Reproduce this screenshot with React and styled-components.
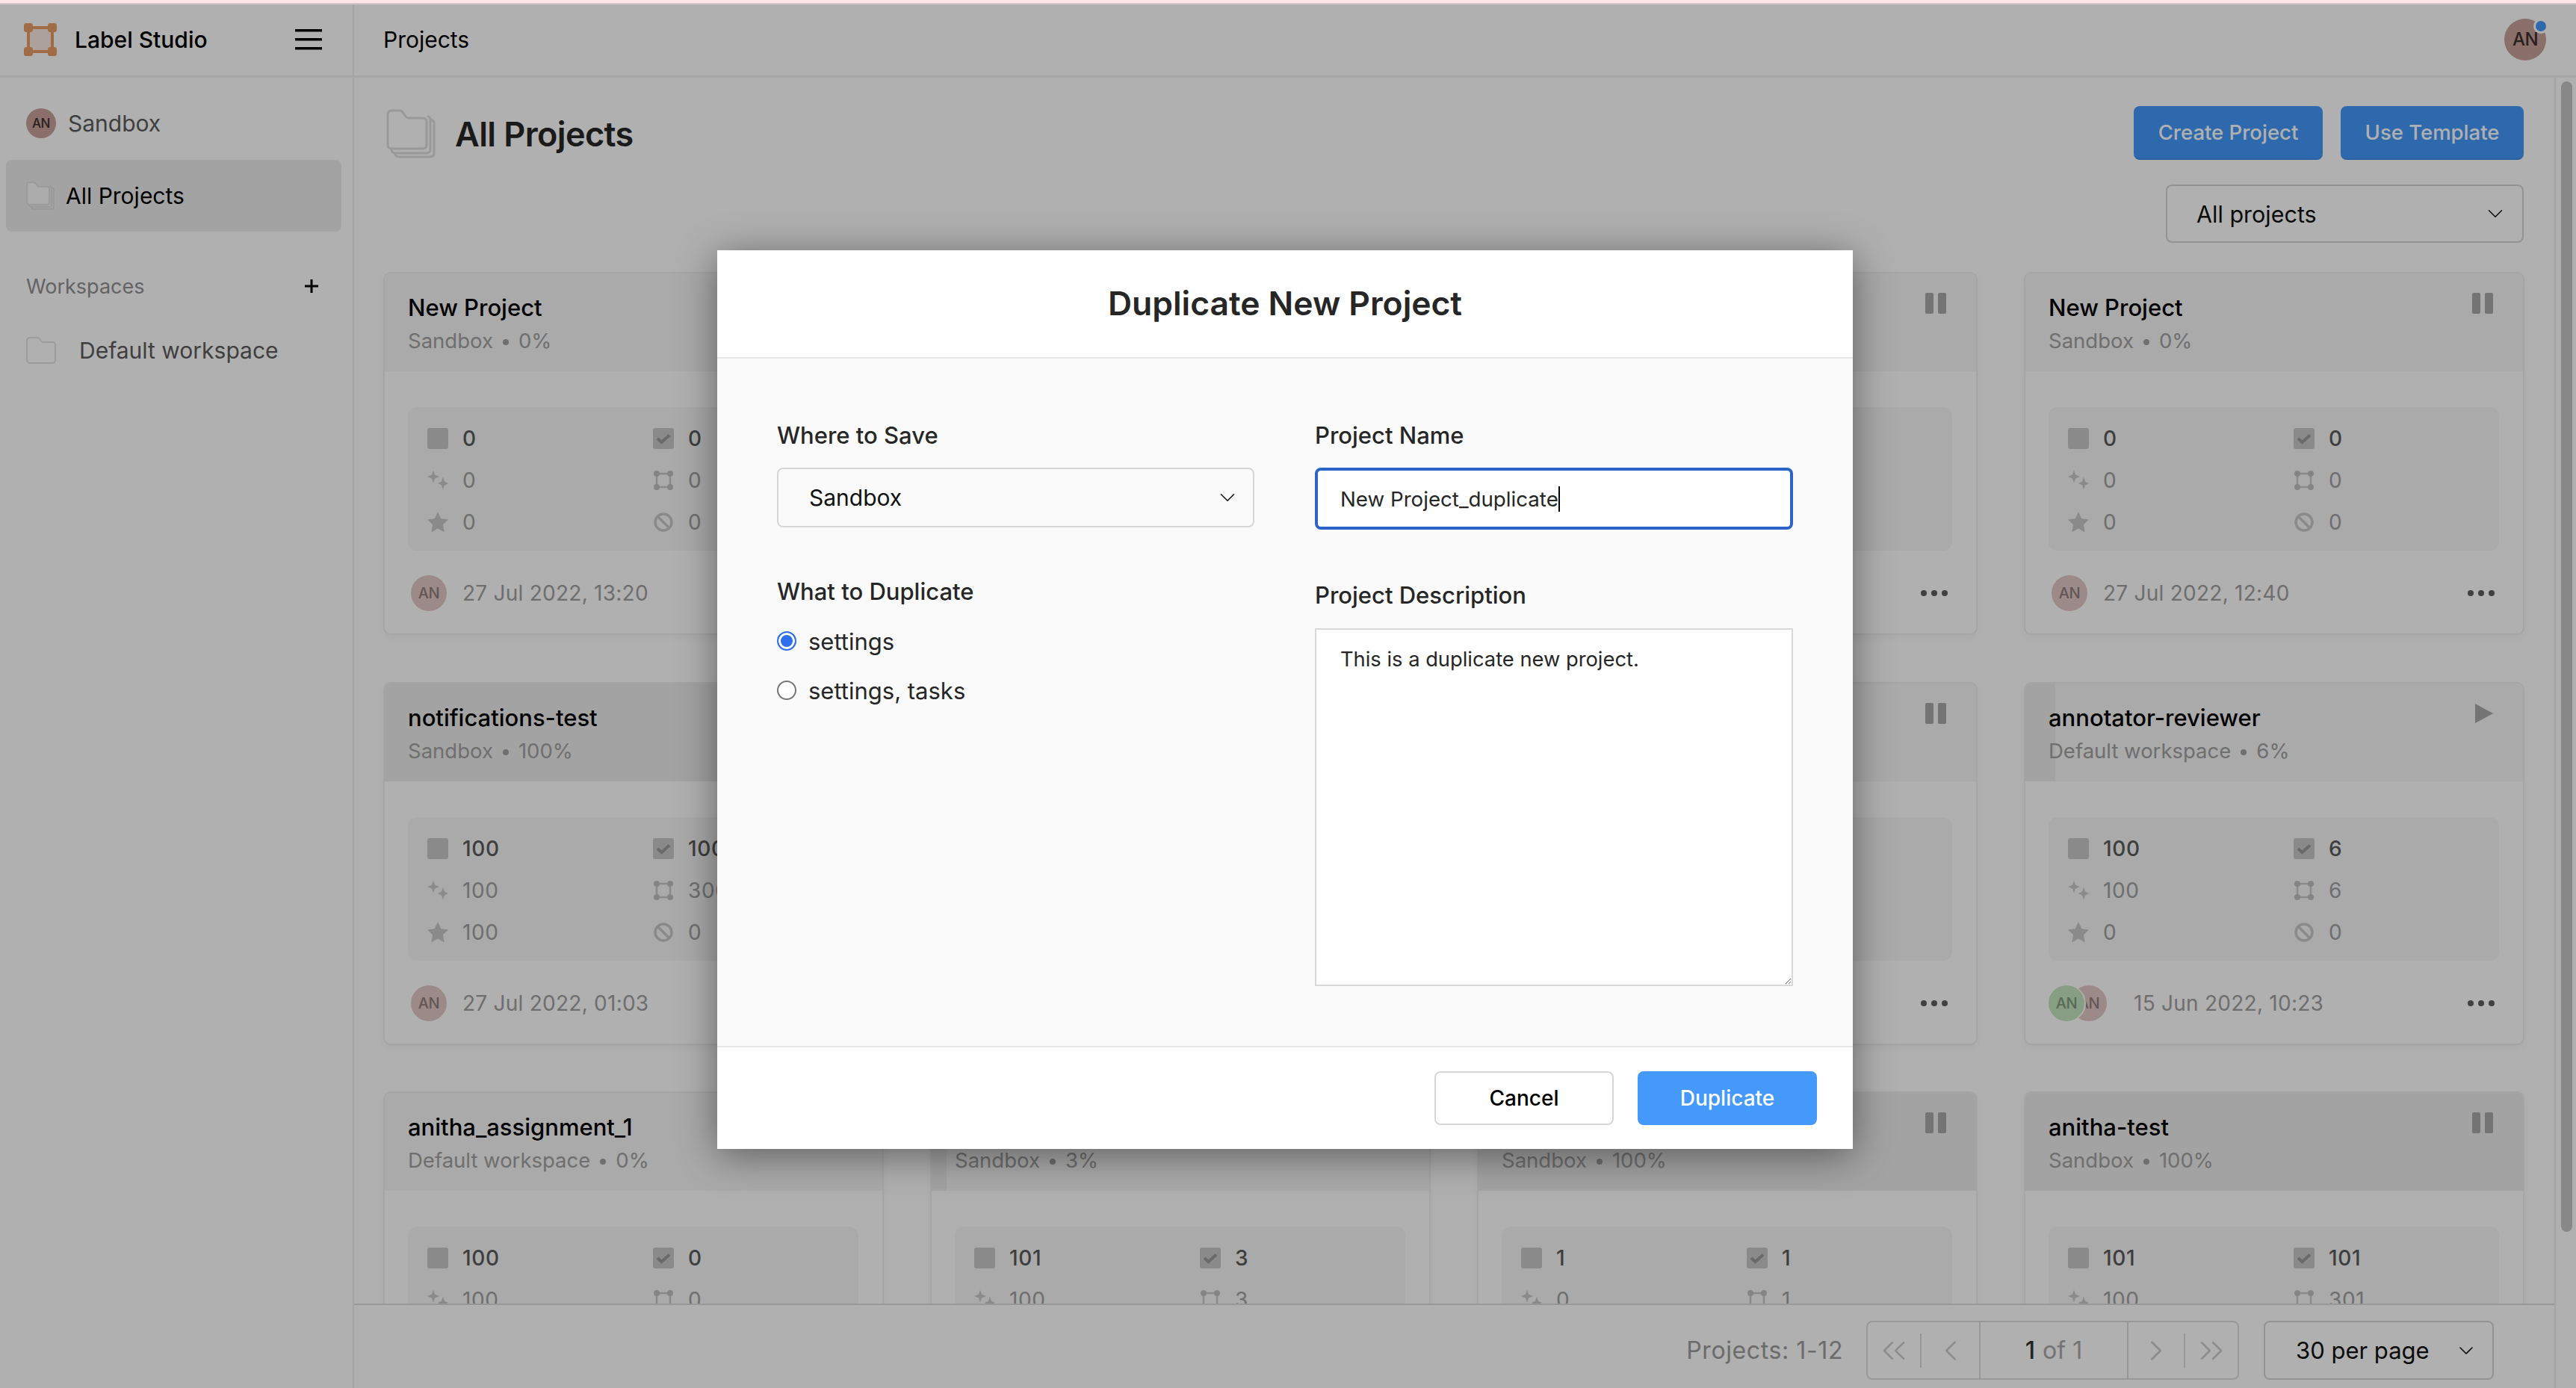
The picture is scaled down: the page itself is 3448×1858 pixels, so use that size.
import React from "react";
import styled, { createGlobalStyle } from "styled-components";
import { ChevronDown, ChevronLeft, ChevronRight, ChevronsLeft, ChevronsRight } from "lucide-react";

const GlobalStyle = createGlobalStyle`
  html, body {
    margin: 0;
    height: 100%;
    overflow: hidden;
    background: #fff;
    font-family: Inter, "Liberation Sans", sans-serif;
  }
  * { box-sizing: border-box; }
`;

const Page = styled.div`
  position: relative;
  display: flex;
  flex-direction: column;
  width: 3448px;
  height: 1858px;
  overflow: hidden;
`;

const TopStrip = styled.div`
  flex: none;
  height: 6px;
  background: #fde6ea;
  border-bottom: 2px solid #d9c3c7;
`;

const TopBar = styled.header`
  flex: none;
  display: flex;
  height: 98px;
  border-bottom: 3px solid #f0f0f0;
`;

const Brand = styled.div`
  flex: none;
  display: flex;
  align-items: center;
  width: 474px;
  padding: 0 41px 2px 32px;
  border-right: 2px solid #eeeeee;
`;

const BrandName = styled.span`
  flex: 1;
  margin-left: 24px;
  font-size: 30px;
  font-weight: 500;
  color: #000;
`;

const Crumb = styled.div`
  flex: 1;
  display: flex;
  align-items: center;
  justify-content: space-between;
  padding: 0 40px 2px 39px;
  font-size: 30px;
  color: #000;
`;

const Avatar = styled.span`
  flex: none;
  display: inline-flex;
  align-items: center;
  justify-content: center;
  width: ${(p) => p.$size}px;
  height: ${(p) => p.$size}px;
  border-radius: 50%;
  background: ${(p) => p.$bg};
  color: ${(p) => p.$color};
  font-size: ${(p) => Math.round(p.$size * 0.42)}px;
  font-weight: 500;
  letter-spacing: -0.5px;
`;

const AvatarPair = styled.div`
  flex: none;
  display: flex;
  isolation: isolate;
  margin: 0 15px 0 -4px;
`;

const FrontAvatar = styled(Avatar)`
  position: relative;
  z-index: 1;
  box-shadow: 2px 0 0 #fff;
`;

const BackAvatar = styled(Avatar)`
  margin-left: -18px;
`;

const UserBadge = styled.div`
  position: relative;
  display: flex;
`;

const NotifyDot = styled.span`
  position: absolute;
  top: 0;
  right: -3px;
  width: 20px;
  height: 20px;
  border: 3px solid #fff;
  border-radius: 50%;
  background: #4499fb;
`;

const Body = styled.div`
  flex: 1;
  display: flex;
  min-height: 0;
`;

const Sidebar = styled.aside`
  flex: none;
  width: 474px;
  padding: 41px 15px 0 8px;
  border-right: 2px solid #eeeeee;
`;

const SideRow = styled.div`
  display: flex;
  align-items: center;
  height: ${(p) => p.$height}px;
  margin-top: ${(p) => p.$top || 0}px;
  padding: 0 ${(p) => p.$right || 0}px 0 27px;
  border-radius: 8px;
  font-size: 30px;
  color: ${(p) => (p.$active ? "#000" : "#5c5c5c")};
  background: ${(p) => (p.$active ? "#ededed" : "transparent")};
  gap: ${(p) => p.$gap}px;
`;

const SideLabel = styled.span`
  flex: 1;
  font-size: 27px;
  color: #909090;
`;

const Main = styled.main`
  flex: 1;
  display: flex;
  min-width: 0;
`;

const MainColumn = styled.div`
  flex: 1;
  display: flex;
  flex-direction: column;
  min-width: 0;
`;

const Scroller = styled.div`
  flex: 1;
  min-height: 0;
  overflow: hidden;
  padding: 38px 41px 0 39px;
`;

const PageHead = styled.div`
  display: flex;
  justify-content: space-between;
  height: 222px;
`;

const PageTitle = styled.div`
  display: flex;
  align-items: center;
  gap: 26px;
  height: 74px;
  padding: 0 0 0 4px;
  font-size: 45px;
  font-weight: 600;
  letter-spacing: -0.6px;
  color: #262626;
`;

const Actions = styled.div`
  display: flex;
  flex-direction: column;
  align-items: flex-end;
  gap: 33px;
`;

const ActionRow = styled.div`
  display: flex;
  gap: 24px;
`;

const ActionButton = styled.button`
  width: ${(p) => p.$width}px;
  height: 72px;
  border: none;
  border-bottom: 2px solid #3d8ce8;
  border-radius: 8px;
  background: #4499fb;
  color: #fff;
  font: 500 27.5px Inter, "Liberation Sans", sans-serif;
`;

const SelectBox = styled.div`
  display: flex;
  align-items: center;
  justify-content: space-between;
  width: ${(p) => p.$width}px;
  height: ${(p) => p.$height}px;
  padding: 0 ${(p) => p.$padRight}px 0 ${(p) => p.$padLeft}px;
  border: 2px solid #d6d6d6;
  border-radius: 8px;
  font-size: ${(p) => p.$font}px;
  color: #111;
`;

const CardGrid = styled.div`
  display: grid;
  grid-template-columns: repeat(4, 670px);
  column-gap: 62px;
  row-gap: 62.5px;
`;

const Card = styled.article`
  height: 486px;
  border: 2px solid #f0f0f0;
  border-radius: 10px;
  background: #fff;
  box-shadow: 0 4px 8px rgba(0, 0, 0, 0.04);
  overflow: hidden;
`;

const CardHead = styled.div`
  display: flex;
  justify-content: space-between;
  height: 131px;
  padding: 0 40px 0 31px;
  background: linear-gradient(to right, #ededed ${(p) => p.$done}%, #f6f6f6 ${(p) => p.$done}%);
`;

const CardName = styled.div`
  margin-top: 26px;
  font-size: 31px;
  line-height: 40px;
  font-weight: 500;
  color: #000;
`;

const CardSub = styled.div`
  display: flex;
  align-items: center;
  gap: 13px;
  margin-top: 7px;
  font-size: 27.5px;
  line-height: 34px;
  color: #a1a1a1;
`;

const SubDot = styled.span`
  width: 8px;
  height: 8px;
  margin-top: 4px;
  border-radius: 50%;
  background: #a1a1a1;
`;

const StateIcon = styled.svg`
  flex: none;
  width: 28px;
  height: 28px;
  margin-top: 26px;
  fill: #a8a8a8;
`;

const Stats = styled.div`
  display: grid;
  grid-template-columns: 302px 1fr;
  grid-auto-rows: 56px;
  height: 192px;
  margin: 48px 32px 0 31px;
  padding: 14px 0 0 26px;
  border-radius: 12px;
  background: #f6f6f6;
`;

const Stat = styled.div`
  display: flex;
  align-items: center;
  gap: 19px;
  font-size: 28px;
  letter-spacing: 0.6px;
  font-weight: ${(p) => (p.$strong ? 500 : 400)};
  color: ${(p) => (p.$strong ? "#5b5b5b" : "#a0a0a0")};
`;

const IconSvg = styled.svg`
  flex: none;
  width: 28px;
  height: 28px;
`;

const CardFoot = styled.div`
  display: flex;
  align-items: center;
  height: 114px;
  padding: 0 38px 0 35px;
`;

const CardDate = styled.span`
  flex: 1;
  margin-left: 21px;
  font-size: 28px;
  letter-spacing: 0.25px;
  color: #a0a0a0;
`;

const Pager = styled.footer`
  flex: none;
  display: flex;
  align-items: flex-start;
  justify-content: flex-end;
  height: 113px;
  padding: 21px 81px 0 0;
  border-top: 2px solid #dcdcdc;
  background: #fff;
`;

const PagerCount = styled.span`
  margin: 20px 31px 0 0;
  font-size: 32px;
  letter-spacing: 0.6px;
  color: #9c9c9c;
`;

const PagerBox = styled.div`
  display: flex;
  align-items: center;
  height: 79px;
  margin-right: 33px;
  border: 2px solid #dddddd;
  border-radius: 8px;
`;

const PagerCell = styled.span`
  display: flex;
  align-items: center;
  justify-content: center;
  width: ${(p) => p.$width}px;
  height: ${(p) => (p.$short ? 46 : 75)}px;
  border-left: ${(p) => (p.$line ? "2px solid #dddddd" : "none")};
  color: #cbcbcb;
`;

const PagerCurrent = styled(PagerCell)`
  height: 75px;
  font-size: 32px;
  color: #a8a8a8;
  b { font-weight: 500; color: #333; margin-right: 10px; }
`;

const Gutter = styled.div`
  flex: none;
  width: 29px;
  padding: 5px 5px 0 7px;
  border-left: 2px solid #eeeeee;
`;

const ScrollThumb = styled.div`
  height: 1540px;
  border-radius: 9px;
  background: #c6c6c6;
`;

const Overlay = styled.div`
  position: absolute;
  inset: 6px 0 0 0;
  z-index: 5;
  display: flex;
  justify-content: center;
  padding: 329px 8px 0 0;
  background: rgba(0, 0, 0, 0.31);
`;

const Modal = styled.section`
  display: flex;
  flex-direction: column;
  width: 1520px;
  height: 1203px;
  background: #fff;
  color: #262626;
  box-shadow: 0 8px 50px rgba(0, 0, 0, 0.45);
`;

const ModalHead = styled.h2`
  flex: none;
  display: flex;
  align-items: center;
  justify-content: center;
  height: 145px;
  margin: 0;
  padding-bottom: 2px;
  border-bottom: 2px solid #e6e6e6;
  font-size: 44.4px;
  font-weight: 600;
`;

const ModalBody = styled.div`
  flex: 1;
  display: grid;
  grid-template-columns: 639px 640px;
  column-gap: 81px;
  padding: 83px 80px 0;
  background: #fafafa;
`;

const Column = styled.div`
  display: flex;
  flex-direction: column;
`;

const FieldLabel = styled.label`
  height: 40px;
  margin-top: ${(p) => p.$top || 0}px;
  margin-bottom: ${(p) => p.$bottom}px;
  font-size: 31px;
  line-height: 40px;
  font-weight: 500;
`;

const RadioRow = styled.div`
  display: flex;
  align-items: center;
  gap: 16px;
  height: 66px;
  font-size: 31px;
`;

const RadioMark = styled.span`
  flex: none;
  width: 26px;
  height: 26px;
  border: 2px solid ${(p) => (p.$on ? "#2f6fed" : "#767676")};
  border-radius: 50%;
  background: ${(p) => (p.$on ? "#2f6fed" : "#fff")};
  box-shadow: ${(p) => (p.$on ? "inset 0 0 0 3px #fff" : "none")};
`;

const NameField = styled.div`
  display: flex;
  align-items: center;
  height: 83px;
  padding: 0 30px;
  border: 4px solid #2b63c8;
  border-radius: 8px;
  background: #fff;
  font-size: 27.7px;
`;

const Caret = styled.span`
  width: 2px;
  height: 34px;
  background: #000;
`;

const Description = styled.textarea`
  display: block;
  width: 640px;
  height: 479px;
  padding: 22px 32px;
  border: 2px solid #d9d9d9;
  border-radius: 0;
  outline: none;
  background: #fff;
  color: #262626;
  font: 400 27.3px/36px Inter, "Liberation Sans", sans-serif;
`;

const ModalFoot = styled.div`
  flex: none;
  display: flex;
  align-items: center;
  justify-content: flex-end;
  gap: 32px;
  height: 138px;
  padding: 0 48px 0 0;
  border-top: 2px solid #e6e6e6;
`;

const FootButton = styled.button`
  width: 240px;
  height: 72px;
  border: ${(p) => (p.$primary ? "none" : "2px solid #d6d6d6")};
  border-radius: 8px;
  background: ${(p) => (p.$primary ? "#4499fb" : "#fff")};
  color: ${(p) => (p.$primary ? "#fff" : "#000")};
  font: 500 28px Inter, "Liberation Sans", sans-serif;
`;

const LogoIcon = () => (
  <svg width="44" height="44" viewBox="0 0 44 44">
    <rect x="6" y="6" width="32" height="32" fill="#fbe9e3" stroke="#e89c64" strokeWidth="4" />
    <g fill="#e89c64">
      <rect x="0" y="0" width="12" height="12" rx="3" />
      <rect x="32" y="0" width="12" height="12" rx="3" />
      <rect x="0" y="32" width="12" height="12" rx="3" />
      <rect x="32" y="32" width="12" height="12" rx="3" />
    </g>
  </svg>
);

const MenuIcon = () => (
  <svg width="36" height="28" viewBox="0 0 36 28" fill="#000">
    <rect width="36" height="3.5" />
    <rect y="12" width="36" height="3.5" />
    <rect y="24" width="36" height="3.5" />
  </svg>
);

const PlusIcon = () => (
  <svg width="18" height="18" viewBox="0 0 18 18" fill="#000">
    <rect x="7.5" width="3" height="18" />
    <rect y="7.5" width="18" height="3" />
  </svg>
);

const FolderIcon = () => (
  <svg width="40" height="36" viewBox="0 0 40 36" fill="none" stroke="#e2e2e2" strokeWidth="2">
    <path d="M5 1h10c1.500 0 2.500 .8 3.400 2l2 3c.6 .8 1.300 1 2.300 1H35c2.200 0 4 1.800 4 4v20c0 2.200-1.800 4-4 4H5c-2.200 0-4-1.800-4-4V5c0-2.200 1.800-4 4-4z" />
  </svg>
);

const FolderStack = ({ size, color = "#dedede", fill = "none" }) => (
  <svg width={size} height={size} viewBox="0 0 66 66" fill={fill} stroke={color} strokeWidth="3">
    <path d="M60 14c3 1 4 3 4 5v40c0 3-2 5-5 5H17c-3 0-5-2-5-5" fill="none" />
    <path d="M55 9c2 1 4 3 4 5v40c0 3-2 5-5 5H12c-3 0-5-2-5-5" fill="none" />
    <path d="M7 2h11c2 0 3 1 4 2l4 6c1 1 2 2 4 2h19c3 0 5 2 5 5v31c0 3-2 5-5 5H7c-3 0-5-2-5-5V7c0-3 2-5 5-5z" />
  </svg>
);

const statIcons = {
  tasks: <rect x="0" y="0" width="28" height="28" rx="3" fill="#c9c9c9" />,
  done: (
    <>
      <rect x="0" y="0" width="28" height="28" rx="3" fill="#c9c9c9" />
      <path d="M6 14l5.500 5L22 9.500" fill="none" stroke="#9a9a9a" strokeWidth="4" />
    </>
  ),
  predictions: (
    <path
      d="M8 0.500l2 6 6 2.500-6 2.500-2 6-2-6-6-2.500 6-2.500zM21 9.500l2 6 5 2.500-5 2.500-2 6-2-6-5-2.500 5-2.500z"
      fill="#c9c9c9"
    />
  ),
  regions: (
    <>
      <rect x="5" y="5" width="18" height="18" fill="none" stroke="#c9c9c9" strokeWidth="2.500" />
      <g fill="#c0c0c0">
        <circle cx="5" cy="5" r="4" />
        <circle cx="23" cy="5" r="4" />
        <circle cx="5" cy="23" r="4" />
        <circle cx="23" cy="23" r="4" />
      </g>
    </>
  ),
  star: <path d="M14 0l4.300 9.300 9.700 1.200-7.100 6.800 1.800 10.200L14 22.500l-8.700 5 1.800-10.200L0 10.500l9.700-1.200z" fill="#c9c9c9" />,
  skipped: (
    <>
      <circle cx="14" cy="14" r="11" fill="none" stroke="#c9c9c9" strokeWidth="3.500" />
      <path d="M6.500 6.500l15 15" stroke="#c9c9c9" strokeWidth="3.500" />
    </>
  ),
};

const StatIcon = ({ kind }) => <IconSvg viewBox="0 0 28 28">{statIcons[kind]}</IconSvg>;

const PauseIcon = () => (
  <StateIcon viewBox="0 0 28 28">
    <rect x="0" y="0" width="11" height="28" rx="2" />
    <rect x="17" y="0" width="11" height="28" rx="2" />
  </StateIcon>
);

const PlayIcon = () => (
  <StateIcon viewBox="0 0 28 28">
    <path d="M4 1l24 13L4 27z" />
  </StateIcon>
);

const DotsIcon = () => (
  <svg width="36" height="8" viewBox="0 0 36 8" fill="#5e5e5e">
    <circle cx="4" cy="4" r="4" />
    <circle cx="18" cy="4" r="4" />
    <circle cx="32" cy="4" r="4" />
  </svg>
);

const projects = [
  { name: "New Project", space: "Sandbox", done: 0, s: [0, 0, 0, 0, 0, 0], date: "27 Jul 2022, 13:20" },
  { name: "New Project", space: "Sandbox", done: 0, s: [0, 0, 0, 0, 0, 0], date: "27 Jul 2022, 13:02" },
  { name: "New Project", space: "Sandbox", done: 0, s: [0, 0, 0, 0, 0, 0], date: "27 Jul 2022, 12:55" },
  { name: "New Project", space: "Sandbox", done: 0, s: [0, 0, 0, 0, 0, 0], date: "27 Jul 2022, 12:40" },
  { name: "notifications-test", space: "Sandbox", done: 100, s: [100, 100, 100, 100, 300, 0], date: "27 Jul 2022, 01:03" },
  { name: "New Project", space: "Sandbox", done: 0, s: [0, 0, 0, 0, 0, 0], date: "26 Jul 2022, 18:11" },
  { name: "New Project", space: "Sandbox", done: 0, s: [0, 0, 0, 0, 0, 0], date: "26 Jul 2022, 17:20" },
  { name: "annotator-reviewer", space: "Default workspace", done: 6, s: [100, 100, 0, 6, 6, 0], date: "15 Jun 2022, 10:23", paused: false, pair: true },
  { name: "anitha_assignment_1", space: "Default workspace", done: 0, s: [100, 100, 0, 0, 0, 0], date: "10 Jun 2022, 09:14" },
  { name: "anitha_project", space: "Sandbox", done: 3, s: [101, 100, 0, 3, 3, 0], date: "9 Jun 2022, 15:40" },
  { name: "anitha_sample", space: "Sandbox", done: 100, s: [1, 0, 0, 1, 1, 0], date: "9 Jun 2022, 11:05" },
  { name: "anitha-test", space: "Sandbox", done: 100, s: [101, 100, 0, 101, 301, 0], date: "8 Jun 2022, 16:32" },
];

const ProjectCard = ({ project }) => {
  const { name, space, done, s, date, paused = true, pair } = project;
  return (
    <Card>
      <CardHead $done={done}>
        <div>
          <CardName>{name}</CardName>
          <CardSub>
            {space} <SubDot /> {done}%
          </CardSub>
        </div>
        {paused ? <PauseIcon /> : <PlayIcon />}
      </CardHead>
      <Stats>
        <Stat $strong><StatIcon kind="tasks" />{s[0]}</Stat>
        <Stat $strong><StatIcon kind="done" />{s[3]}</Stat>
        <Stat><StatIcon kind="predictions" />{s[1]}</Stat>
        <Stat><StatIcon kind="regions" />{s[4]}</Stat>
        <Stat><StatIcon kind="star" />{s[2]}</Stat>
        <Stat><StatIcon kind="skipped" />{s[5]}</Stat>
      </Stats>
      <CardFoot>
        {pair ? (
          <AvatarPair>
            <FrontAvatar $size={48} $bg="#c4e5bf" $color="#7d9a7b">AN</FrontAvatar>
            <BackAvatar $size={48} $bg="#e3c8c5" $color="#8f7d7b">AN</BackAvatar>
          </AvatarPair>
        ) : (
          <Avatar $size={48} $bg="#e3c8c5" $color="#8f7d7b">AN</Avatar>
        )}
        <CardDate>{date}</CardDate>
        <DotsIcon />
      </CardFoot>
    </Card>
  );
};

export default function App() {
  return (
    <Page>
      <GlobalStyle />
      <TopStrip />
      <TopBar>
        <Brand>
          <LogoIcon />
          <BrandName>Label Studio</BrandName>
          <MenuIcon />
        </Brand>
        <Crumb>
          Projects
          <UserBadge>
            <Avatar $size={56} $bg="#c9a19b" $color="#3a2f2d">AN</Avatar>
            <NotifyDot />
          </UserBadge>
        </Crumb>
      </TopBar>
      <Body>
        <Sidebar>
          <SideRow $height={40} $gap={16}>
            <Avatar $size={40} $bg="#c9a19b" $color="#3a2f2d">AN</Avatar>
            Sandbox
          </SideRow>
          <SideRow $height={96} $top={29} $active $gap={15}>
            <FolderStack size={38} fill="#fafafa" />
            All Projects
          </SideRow>
          <SideRow $height={40} $top={53} $right={31}>
            <SideLabel>Workspaces</SideLabel>
            <PlusIcon />
          </SideRow>
          <SideRow $height={40} $top={46} $gap={31}>
            <FolderIcon />
            Default workspace
          </SideRow>
        </Sidebar>
        <Main>
          <MainColumn>
            <Scroller>
              <PageHead>
                <PageTitle>
                  <FolderStack size={66} />
                  All Projects
                </PageTitle>
                <Actions>
                  <ActionRow>
                    <ActionButton $width={253}>Create Project</ActionButton>
                    <ActionButton $width={245}>Use Template</ActionButton>
                  </ActionRow>
                  <SelectBox $width={479} $height={78} $padLeft={39} $padRight={19} $font={30.5}>
                    All projects
                    <ChevronDown size={34} strokeWidth={1.1} />
                  </SelectBox>
                </Actions>
              </PageHead>
              <CardGrid>
                {projects.map((project, i) => (
                  <ProjectCard key={i} project={project} />
                ))}
              </CardGrid>
            </Scroller>
            <Pager>
              <PagerCount>Projects: 1-12</PagerCount>
              <PagerBox>
                <PagerCell $width={70}><ChevronsLeft size={52} strokeWidth={1.2} /></PagerCell>
                <PagerCell $width={79} $short $line><ChevronLeft size={46} strokeWidth={1.3} /></PagerCell>
                <PagerCurrent $width={198} $line><b>1</b> of 1</PagerCurrent>
                <PagerCell $width={76} $line><ChevronRight size={46} strokeWidth={1.3} /></PagerCell>
                <PagerCell $width={72} $short $line><ChevronsRight size={52} strokeWidth={1.2} /></PagerCell>
              </PagerBox>
              <SelectBox $width={308} $height={79} $padLeft={41} $padRight={19} $font={31}>
                30 per page
                <ChevronDown size={32} strokeWidth={1.2} />
              </SelectBox>
            </Pager>
          </MainColumn>
          <Gutter>
            <ScrollThumb />
          </Gutter>
        </Main>
      </Body>
      <Overlay>
        <Modal>
          <ModalHead>Duplicate New Project</ModalHead>
          <ModalBody>
            <Column>
              <FieldLabel $bottom={23}>Where to Save</FieldLabel>
              <SelectBox $width={639} $height={80} $padLeft={41} $padRight={17} $font={30}>
                Sandbox
                <ChevronDown size={34} strokeWidth={1.1} />
              </SelectBox>
              <FieldLabel $top={66} $bottom={13}>What to Duplicate</FieldLabel>
              <RadioRow><RadioMark $on />settings</RadioRow>
              <RadioRow><RadioMark />settings, tasks</RadioRow>
            </Column>
            <Column>
              <FieldLabel $bottom={23}>Project Name</FieldLabel>
              <NameField>New Project_duplicate<Caret /></NameField>
              <FieldLabel $top={68} $bottom={24}>Project Description</FieldLabel>
              <Description defaultValue="This is a duplicate new project." />
            </Column>
          </ModalBody>
          <ModalFoot>
            <FootButton>Cancel</FootButton>
            <FootButton $primary>Duplicate</FootButton>
          </ModalFoot>
        </Modal>
      </Overlay>
    </Page>
  );
}
